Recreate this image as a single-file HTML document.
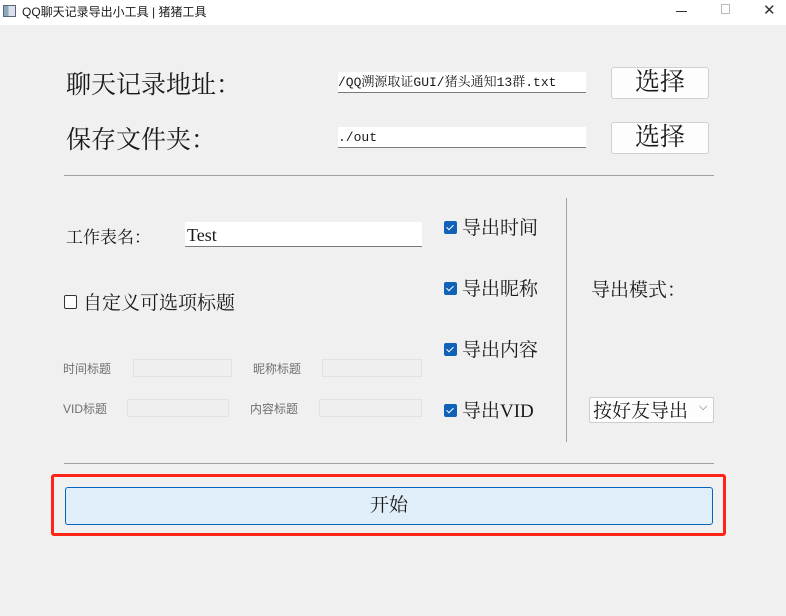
<!DOCTYPE html>
<html><head><meta charset="utf-8"><style>
*{margin:0;padding:0;box-sizing:border-box}
body{width:786px;height:616px;background:#f0f0f0;position:relative;overflow:hidden;font-family:"Liberation Serif","Noto Serif CJK SC",serif;color:#1a1a1a}
.a{position:absolute;white-space:nowrap}
.tb{left:0;top:0;width:786px;height:25px;background:#fff}
.inp{position:absolute;background:#fff;border-bottom:1px solid #7a7a7a;overflow:hidden;font-family:"Liberation Mono","Noto Serif CJK SC",monospace}
.btn{position:absolute;background:#fdfdfd;border:1px solid #d0d0d0;border-radius:3px;text-align:center;font-size:25px;line-height:29px}
.sm{position:absolute;background:#efefef;border:1px solid #e2e2e2}
.lbl{font-size:12px;color:#707070;font-family:"Liberation Sans","Noto Sans CJK SC",sans-serif}
.cb{position:absolute;width:13px;height:13px;background:#0f62b8;border-radius:2px}
.cb:after{content:"";position:absolute;left:4px;top:2px;width:3px;height:6px;border:solid #fff;border-width:0 1px 1px 0;transform:rotate(45deg)}
.ct{font-size:19px}
</style></head><body>
<div class="a tb"></div>
<div class="a" style="left:3px;top:5px;width:13px;height:12px;border:1px solid #567;background:linear-gradient(90deg,#8ab 0 40%,#dde 40%)"></div>
<div class="a" style="left:22px;top:3px;font-size:12px;font-family:'Liberation Sans','Noto Sans CJK SC',sans-serif">QQ聊天记录导出小工具 | 猪猪工具</div>
<div class="a" style="left:676px;top:11px;width:11px;height:1px;background:#333"></div>
<div class="a" style="left:721px;top:4px;width:9px;height:10px;border:1px solid #bbb"></div>
<div class="a" style="left:763px;top:1px;font-size:15px;font-family:'Liberation Sans',sans-serif;color:#333;font-weight:100">✕</div>

<div class="a" style="left:66px;top:65px;font-size:25px">聊天记录地址：</div>
<div class="a" style="left:66px;top:120px;font-size:25px">保存文件夹：</div>
<div class="inp" style="left:338px;top:72px;width:248px;height:21px;font-size:13px;line-height:21px">/QQ溯源取证GUI/猪头通知13群.txt</div>
<div class="inp" style="left:338px;top:127px;width:248px;height:21px;font-size:13px;line-height:21px">./out</div>
<div class="btn" style="left:611px;top:67px;width:98px;height:32px">选择</div>
<div class="btn" style="left:611px;top:122px;width:98px;height:32px">选择</div>
<div class="a" style="left:64px;top:175px;width:650px;height:1px;background:#a0a0a0"></div>

<div class="a" style="left:66px;top:223px;font-size:17px">工作表名：</div>
<div class="inp" style="left:185px;top:222px;width:237px;height:25px;font-size:18px;line-height:27px;padding-left:2px;font-family:'Liberation Serif',serif">Test</div>
<div class="a" style="left:64px;top:295px;width:13px;height:14px;border:1px solid #333;border-radius:2px;background:#fff"></div>
<div class="a ct" style="left:83px;top:288px">自定义可选项标题</div>

<div class="a lbl" style="left:63px;top:360px">时间标题</div>
<div class="sm" style="left:133px;top:359px;width:99px;height:18px"></div>
<div class="a lbl" style="left:253px;top:360px">昵称标题</div>
<div class="sm" style="left:322px;top:359px;width:100px;height:18px"></div>
<div class="a lbl" style="left:63px;top:400px">VID标题</div>
<div class="sm" style="left:127px;top:399px;width:102px;height:18px"></div>
<div class="a lbl" style="left:250px;top:400px">内容标题</div>
<div class="sm" style="left:319px;top:399px;width:103px;height:18px"></div>

<div class="cb" style="left:444px;top:221px"></div><div class="a ct" style="left:462px;top:213px">导出时间</div>
<div class="cb" style="left:444px;top:282px"></div><div class="a ct" style="left:462px;top:274px">导出昵称</div>
<div class="cb" style="left:444px;top:343px"></div><div class="a ct" style="left:462px;top:335px">导出内容</div>
<div class="cb" style="left:444px;top:404px"></div><div class="a ct" style="left:462px;top:396px">导出VID</div>

<div class="a" style="left:566px;top:198px;width:1px;height:244px;background:#a0a0a0"></div>
<div class="a ct" style="left:591px;top:275px">导出模式：</div>
<div class="a" style="left:589px;top:397px;width:125px;height:26px;background:#fdfdfd;border:1px solid #ccc;border-radius:2px"></div>
<div class="a ct" style="left:593px;top:396px">按好友导出</div>
<div class="a" style="left:699px;top:401px;font-size:11px;color:#555;font-family:'Liberation Sans',sans-serif">⌵</div>

<div class="a" style="left:64px;top:463px;width:650px;height:1px;background:#a0a0a0"></div>
<div class="a" style="left:51px;top:474px;width:675px;height:62px;border:3px solid #ff2418;border-radius:3px"></div>
<div class="a" style="left:65px;top:487px;width:648px;height:38px;background:#e0eef9;border:1px solid #0067c0;border-radius:3px;text-align:center;font-size:19px;line-height:36px">开始</div>
</body></html>
